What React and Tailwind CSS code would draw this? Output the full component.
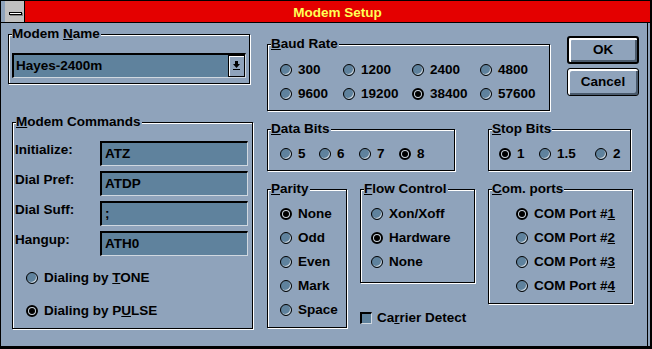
import React from 'react';
import clsx from 'clsx';

function Radio({ on }) {
  if (on) {
    return (
      <span className="flex h-[12px] w-[12px] shrink-0 items-center justify-center rounded-full border-2 border-black bg-[#c8d2dc]">
        <span className="h-[6px] w-[6px] rounded-full bg-black" />
      </span>
    );
  }
  return <span className="h-[12px] w-[12px] shrink-0 rounded-full border border-black bg-[#5f829d] shadow-[inset_-1px_-1px_0_#c8d2dc]" />;
}

function Opt({ on, className, children }) {
  return (
    <div className={clsx('flex h-[16px] items-center gap-[6px] whitespace-nowrap', className)}>
      <Radio on={on} />
      <span>{children}</span>
    </div>
  );
}

// etched group box, label sits over the top line
function Group({ label, className, children }) {
  return (
    <div className={clsx('relative shrink-0 border border-black shadow-[inset_1px_1px_0_#fff,1px_1px_0_#fff]', className)}>
      <span className="absolute -top-[9px] left-[3px] whitespace-nowrap bg-[#8fa3bb] pr-[1px] leading-[16px]">{label}</span>
      {children}
    </div>
  );
}

function Field({ children }) {
  return (
    <div className="h-[25px] w-[148px] border-t-2 border-l-2 border-r border-b border-t-black border-l-black border-r-[#d0d8e0] border-b-[#d0d8e0] bg-[#5f829d] pl-[3px] leading-[22px]">
      {children}
    </div>
  );
}

function Button({ primary, children }) {
  return (
    <div
      className={clsx(
        'flex h-[28px] w-[72px] items-center justify-center rounded-[3px] border-black shadow-[inset_2px_2px_0_#fff,inset_-2px_-2px_0_#4a5a6c]',
        primary ? 'border-2' : 'border'
      )}
    >
      {children}
    </div>
  );
}

const commands = [
  ['Initialize:', 'ATZ'],
  ['Dial Pref:', 'ATDP'],
  ['Dial Suff:', ';'],
  ['Hangup:', 'ATH0'],
];

export default function App() {
  return (
    <div className="flex h-[349px] w-[652px] flex-col border-t border-l border-r-2 border-b-[3px] border-black bg-[#8fa3bb] font-['Liberation_Sans',Arial,sans-serif] text-[13.5px] font-bold leading-[16px] text-black">
      {/* title bar */}
      <div className="flex h-[22px] shrink-0 border-b border-black">
        <div className="w-[4px]" />
        <div className="w-[20px] border-r border-black bg-[#c0c0c0] pl-[4px] pt-[11px]">
          <div className="h-[3px] w-[13px] border border-black bg-white shadow-[1px_1px_0_#808080]" />
        </div>
        <div className="flex flex-1 justify-center bg-[#e40000] pt-[4px] text-[#ffff55]">Modem Setup</div>
      </div>

      {/* body */}
      <div className="mr-[2px] flex flex-1 border-r border-black pl-[7px]">
        {/* left column */}
        <div className="flex w-[245px] shrink-0 flex-col">
          <Group
            label={
              <>
                Modem <u>N</u>ame
              </>
            }
            className="mt-[11px] h-[50px] w-[242px]"
          >
            <div className="ml-[3px] mt-[18px] flex h-[25px] w-[234px] border-t-2 border-l-2 border-r border-b border-t-black border-l-black border-r-[#d0d8e0] border-b-[#d0d8e0] bg-[#5f829d]">
              <span className="flex-1 pl-[2px] leading-[22px]">Hayes-2400m</span>
              <div className="flex h-full w-[17px] items-center justify-center border border-black bg-[#8fa3bb] shadow-[inset_1px_1px_0_#fff]">
                <svg width="7" height="10" viewBox="0 0 7 10">
                  <rect x="2" y="0" width="3" height="3" fill="#000" />
                  <polygon points="0,3 7,3 3.5,7" fill="#000" />
                  <rect x="0" y="8" width="7" height="1" fill="#000" />
                </svg>
              </div>
            </div>
          </Group>

          <Group
            label={
              <>
                <u>M</u>odem Commands
              </>
            }
            className="ml-[4px] mt-[38px] h-[207px] w-[241px]"
          >
            <div className="flex flex-col gap-[5px] pl-[2px] pt-[18px]">
              {commands.map(([label, value]) => (
                <div key={label} className="flex h-[25px]">
                  <span className="w-[85px] pt-[1px]">{label}</span>
                  <Field>{value}</Field>
                </div>
              ))}
            </div>
            <div className="pl-[13px]">
              <Opt className="mt-[14px]">
                Dialing by <u>T</u>ONE
              </Opt>
              <Opt on className="mt-[17px]">
                Dialing by P<u>U</u>LSE
              </Opt>
            </div>
          </Group>
        </div>

        {/* right area */}
        <div className="ml-[14px] flex flex-col">
          <div className="flex items-start">
            <Group
              label={
                <>
                  <u>B</u>aud Rate
                </>
              }
              className="mt-[21px] h-[67px] w-[283px]"
            >
              <div className="grid grid-cols-[63px_69px_68px_auto] gap-y-[8px] pl-[12px] pt-[17px]">
                <Opt>300</Opt>
                <Opt>1200</Opt>
                <Opt>2400</Opt>
                <Opt>4800</Opt>
                <Opt>9600</Opt>
                <Opt>19200</Opt>
                <Opt on>38400</Opt>
                <Opt>57600</Opt>
              </div>
            </Group>
            <div className="ml-[17px] mt-[13px] flex flex-col gap-[4px]">
              <Button primary>OK</Button>
              <Button>Cancel</Button>
            </div>
          </div>

          <div className="mt-[18px] flex">
            <Group
              label={
                <>
                  <u>D</u>ata Bits
                </>
              }
              className="h-[42px] w-[188px]"
            >
              <div className="flex pl-[12px] pt-[16px]">
                <Opt className="w-[39px]">5</Opt>
                <Opt className="w-[40px]">6</Opt>
                <Opt className="w-[40px]">7</Opt>
                <Opt on>8</Opt>
              </div>
            </Group>
            <Group
              label={
                <>
                  <u>S</u>top Bits
                </>
              }
              className="ml-[33px] h-[42px] w-[143px]"
            >
              <div className="flex pl-[10px] pt-[16px]">
                <Opt on className="w-[40px]">1</Opt>
                <Opt className="w-[56px]">1.5</Opt>
                <Opt>2</Opt>
              </div>
            </Group>
          </div>

          <div className="mt-[18px] flex items-start">
            <Group
              label={
                <>
                  <u>P</u>arity
                </>
              }
              className="h-[139px] w-[80px]"
            >
              <div className="flex flex-col gap-[8px] pl-[12px] pt-[16px]">
                <Opt on>None</Opt>
                <Opt>Odd</Opt>
                <Opt>Even</Opt>
                <Opt>Mark</Opt>
                <Opt>Space</Opt>
              </div>
            </Group>

            <div className="ml-[13px] flex flex-col">
              <Group
                label={
                  <>
                    <u>F</u>low Control
                  </>
                }
                className="h-[94px] w-[115px]"
              >
                <div className="flex flex-col gap-[8px] pl-[10px] pt-[16px]">
                  <Opt>Xon/Xoff</Opt>
                  <Opt on>Hardware</Opt>
                  <Opt>None</Opt>
                </div>
              </Group>
              <div className="mt-[27px] flex h-[16px] items-center gap-[5px]">
                <span className="h-[12px] w-[12px] border-t-2 border-l-2 border-r border-b border-t-black border-l-black border-r-[#d0d8e0] border-b-[#d0d8e0] bg-[#5f829d]" />
                <span>
                  Ca<u>r</u>rier Detect
                </span>
              </div>
            </div>

            <Group
              label={
                <>
                  <u>C</u>om. ports
                </>
              }
              className="ml-[13px] h-[115px] w-[145px]"
            >
              <div className="flex flex-col gap-[8px] pl-[27px] pt-[16px]">
                <Opt on>
                  COM Port #<u>1</u>
                </Opt>
                <Opt>
                  COM Port #<u>2</u>
                </Opt>
                <Opt>
                  COM Port #<u>3</u>
                </Opt>
                <Opt>
                  COM Port #<u>4</u>
                </Opt>
              </div>
            </Group>
          </div>
        </div>
      </div>
    </div>
  );
}
